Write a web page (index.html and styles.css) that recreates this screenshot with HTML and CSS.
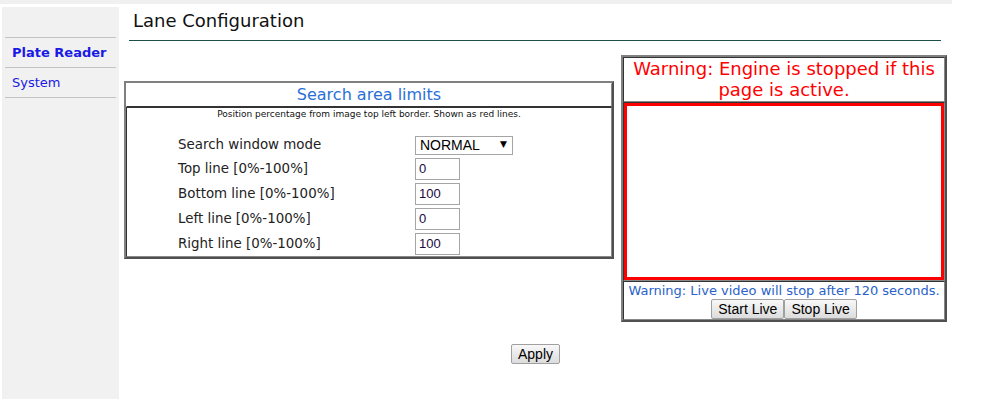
FILE: index.html
```html
<!DOCTYPE html>
<html lang="en">
<head>
    <meta charset="UTF-8">
    <title>Lane Configuration</title>
    <link rel="stylesheet" href="styles.css">
</head>
<body>
    <div class="topbar"></div>
    <div class="page">
        <nav class="sidebar">
            <a class="nav-item active" href="#">Plate Reader</a>
            <a class="nav-item" href="#">System</a>
        </nav>

        <main class="main">
            <h1 class="title">Lane Configuration</h1>
            <div class="title-rule"></div>

            <div class="content">
                <div class="panel limits">
                    <div class="cell limits-head">Search area limits</div>
                    <div class="cell limits-body">
                        <p class="note">Position percentage from image top left border. Shown as red lines.</p>
                        <div class="form">
                            <label class="form-label">Search window mode</label>
                            <span class="select-wrap">
                                <select class="select">
                                    <option>NORMAL</option>
                                </select>
                            </span>
                            <label class="form-label">Top line [0%-100%]</label>
                            <input class="num" type="text" value="0">
                            <label class="form-label">Bottom line [0%-100%]</label>
                            <input class="num" type="text" value="100">
                            <label class="form-label">Left line [0%-100%]</label>
                            <input class="num" type="text" value="0">
                            <label class="form-label">Right line [0%-100%]</label>
                            <input class="num" type="text" value="100">
                        </div>
                    </div>
                </div>

                <div class="panel live">
                    <div class="cell live-head">Warning: Engine is stopped if this page is active.</div>
                    <div class="cell live-view">
                        <div class="video"></div>
                    </div>
                    <div class="cell live-foot">
                        <div class="live-note">Warning: Live video will stop after 120 seconds.</div>
                        <div class="live-buttons">
                            <button class="btn">Start Live</button><button class="btn">Stop Live</button>
                        </div>
                    </div>
                </div>
            </div>

            <div class="actions">
                <button class="btn">Apply</button>
            </div>
        </main>
    </div>
</body>
</html>
```

FILE: styles.css
```css
body {
    margin: 0;
    font-family: "DejaVu Sans", Verdana, sans-serif;
    color: #222;
    background: #fff;
}
.topbar {
    width: 952px;
    height: 4px;
    background-color: #f0f0f0;
}
.page {
    display: flex;
    align-items: stretch;
    min-height: 395px;
}
.sidebar {
    width: 117px;
    margin: 3px 0 0 2px;
    padding-top: 30px;
    background-color: #f1f1f1; /* gris clair du menu */
    display: flex;
    flex-direction: column;
}
.nav-item {
    display: block;
    margin: 0 3px;
    height: 29px;
    line-height: 29px;
    padding-left: 7px;
    border-top: 1px solid #c4c4c4;
    font-size: 13px;
    color: #1a1ae6;
    text-decoration: none;
}
.nav-item:last-child {
    border-bottom: 1px solid #c4c4c4;
}
.nav-item.active {
    font-weight: bold;
}
.main {
    flex: 1;
    padding-left: 5px;
}
.title {
    margin: 7px 0 0 9px;
    font-size: 18px;
    font-weight: normal;
    line-height: 20px;
    color: #111;
}
.title-rule {
    width: 812px;
    margin: 9px 0 0 5px;
    border-top: 1px solid #1d4f4a;
}
.content {
    display: flex;
    align-items: flex-start;
    gap: 7px;
    margin-top: 14px;
}
.panel {
    border: 2px solid;
    border-color: #808080 #505050 #505050 #808080;
    display: flex;
    flex-direction: column;
}
.cell {
    border: 1px solid;
    border-color: #333 #888 #888 #333;
}
.limits {
    width: 486px;
    margin-top: 26px;
}
.limits-head {
    height: 22px;
    line-height: 22px;
    text-align: center;
    font-size: 16px;
    color: #2a6fd6;
    border-color: #fff #888 #333 #fff;
}
.limits-body {
    height: 148px;
}
.note {
    margin: 1px 0 0;
    text-align: center;
    font-size: 9px;
    line-height: 11px;
    color: #111;
}
.form {
    display: grid;
    grid-template-columns: 237px auto;
    row-gap: 3px;
    align-items: center;
    margin: 15px 0 0 51px;
}
.form-label {
    font-size: 13.4px;
}
.select-wrap {
    position: relative;
    width: 98px;
    justify-self: start;
}
.select {
    appearance: none;
    -webkit-appearance: none;
    width: 98px;
    height: 19px;
    padding: 0 0 0 4px;
    border: 1px solid #a5a5a5;
    background: #fff;
    font-family: "Liberation Sans", Arial, sans-serif;
    font-size: 14px;
    color: #000;
}
.select-wrap::after {
    content: "\25BC";
    position: absolute;
    right: 6px;
    top: 4px;
    font-size: 9px;
    color: #000;
    pointer-events: none;
}
.num {
    width: 45px;
    height: 22px;
    box-sizing: border-box;
    padding: 0 3px;
    border: 1px solid #a5a5a5;
    font-family: "Liberation Sans", Arial, sans-serif;
    font-size: 13px;
    color: #1a0a40;
}
.live {
    width: 322px;
}
.live-head {
    height: 43px;
    text-align: center;
    font-size: 18px;
    line-height: 21px;
    color: #ff0000;
}
.video {
    height: 171px;
    border: 3px solid #ff0000;
    background: #fff;
}
.live-foot {
    height: 37px;
    text-align: center;
}
.live-note {
    font-size: 13px;
    line-height: 16px;
    margin-top: 1px;
    color: #2a62c9;
}
.btn {
    height: 20px;
    padding: 0 6px;
    border: 1px solid #a0a0a0;
    border-radius: 2px;
    background: linear-gradient(#f8f8f8, #dcdcdc);
    font-family: "Liberation Sans", Arial, sans-serif;
    font-size: 14px;
    color: #000;
}
.actions {
    text-align: center;
    width: 823px;
    margin-top: 22px;
}
```
